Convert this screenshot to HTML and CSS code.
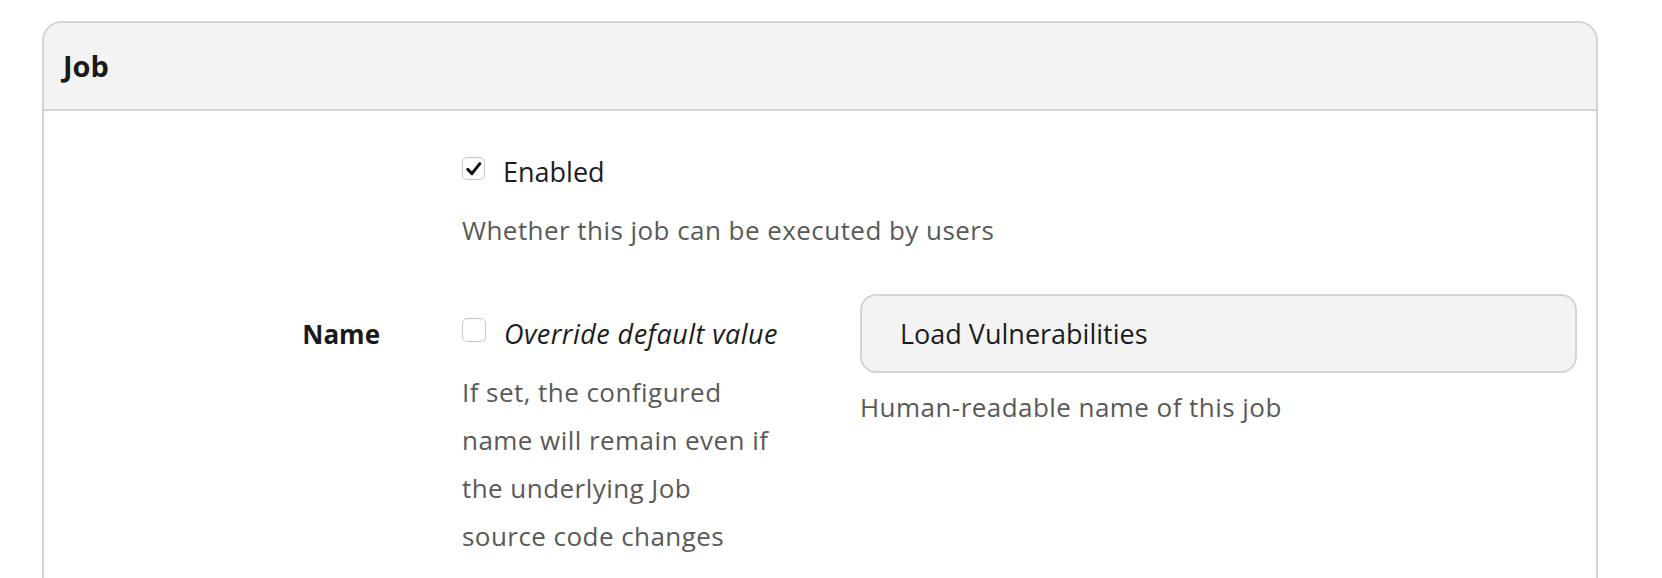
FILE: index.html
```html
<!DOCTYPE html>
<html lang="en">
<head>
<meta charset="utf-8">
<title>Job</title>
<link rel="stylesheet" href="styles.css">
</head>
<body>
<div class="page">
  <section class="card">
    <header class="card-header">Job</header>
    <div class="card-body">
      <div class="row row-enabled">
        <div class="label"></div>
        <div class="field">
          <label class="check">
            <span class="box checked"><svg viewBox="0 0 24 24" width="20" height="20" aria-hidden="true"><path d="M4.5 12.5 L9.5 17.5 L19 5.5" fill="none" stroke="#111" stroke-width="3.6" stroke-linecap="round" stroke-linejoin="round"/></svg></span>
            <span class="check-text">Enabled</span>
          </label>
          <p class="help help-enabled">Whether this job can be executed by users</p>
        </div>
      </div>
      <div class="row row-name">
        <div class="label label-name">Name</div>
        <div class="field field-split">
          <div class="override">
            <label class="check check-override">
              <span class="box"></span>
              <em class="check-text">Override default value</em>
            </label>
            <p class="help help-override">If set, the configured name will remain even if the underlying Job source code changes</p>
          </div>
          <div class="value">
            <input class="text-input" type="text" value="Load Vulnerabilities" readonly>
            <p class="help help-value">Human-readable name of this job</p>
          </div>
        </div>
      </div>
    </div>
  </section>
</div>
</body>
</html>
```

FILE: styles.css
```css
html, body {
  margin: 0;
  padding: 0;
  background: #ffffff;
}

body {
  font-family: "Open Sans", "Noto Sans", sans-serif;
  color: #1c1c1c;
}

.page {
  padding: 21px 64px 0 42px;
}

.card {
  border: 2px solid #d4d4d4;
  border-radius: 20px;
  overflow: hidden;
  background: #ffffff;
}

.card-header {
  background: #f3f3f3;
  border-bottom: 2px solid #d4d4d4;
  padding: 25px 19px 25px;
  font-size: 29px;
  line-height: 36px;
  font-weight: 700;
  color: #1a1a1a;
}

.card-body {
  padding: 43px 19px 40px;
}

.row {
  display: grid;
  grid-template-columns: 357px 1fr;
  column-gap: 42px;
}

.row-name {
  margin-top: 40px;
}

.label {
  text-align: right;
  padding-right: 40px;
  font-size: 26px;
  line-height: 36px;
  font-weight: 700;
  color: #1a1a1a;
}

.label-name {
  padding-top: 22px;
}

.check {
  display: flex;
  align-items: flex-start;
  gap: 18px;
  font-size: 27px;
  line-height: 36px;
  color: #1c1c1c;
}

.box {
  flex: none;
  box-sizing: border-box;
  width: 23px;
  height: 23px;
  margin-top: 3px;
  border: 1px solid #c9c9c9;
  border-radius: 5px;
  background: #ffffff;
  box-shadow: inset 0 1px 1px rgba(0, 0, 0, 0.04);
  display: flex;
  align-items: center;
  justify-content: center;
}

.check-override {
  padding-top: 22px;
}

.check-override .box {
  width: 24px;
  height: 24px;
  margin-top: 2px;
}

.check-override .check-text {
  font-style: italic;
  font-size: 27px;
  letter-spacing: 0.45px;
}

.help {
  margin: 0;
  font-size: 26px;
  letter-spacing: 0.45px;
  line-height: 48px;
  color: #595959;
}

.help-enabled {
  margin-top: 16px;
}

.field-split {
  display: flex;
  gap: 80px;
}

.override {
  flex: none;
  width: 318px;
}

.help-override {
  margin-top: 16px;
}

.value {
  flex: 1;
  min-width: 0;
}

.text-input {
  display: block;
  box-sizing: border-box;
  width: 100%;
  height: 79px;
  margin: 0;
  padding: 0 0 0 38px;
  border: 2px solid #d4d4d4;
  border-radius: 16px;
  background: #f3f3f3;
  font-family: "Open Sans", "Noto Sans", sans-serif;
  font-size: 27px;
  color: #1c1c1c;
  outline: none;
}

.help-value {
  margin-top: 10px;
}
```
